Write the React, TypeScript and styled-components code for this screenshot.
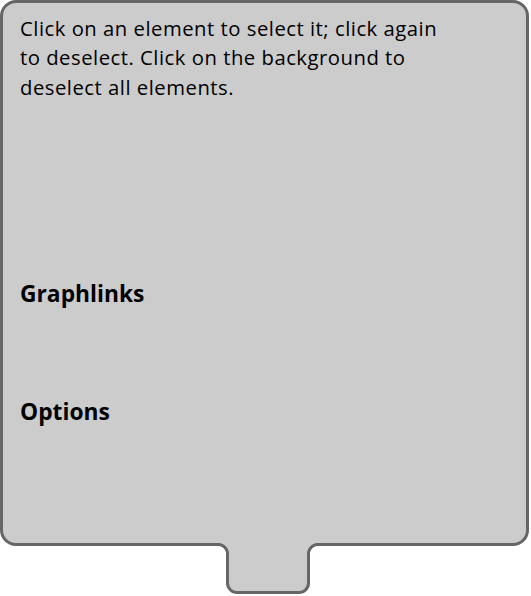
import React from "react";
import styled, { createGlobalStyle } from "styled-components";

const Global = createGlobalStyle`
  html, body { margin: 0; padding: 0; background: #ffffff; }
  body { font-family: "Open Sans", "Liberation Sans", sans-serif; }
`;

const Frame = styled.div`
  display: flex;
  flex-direction: column;
  width: 529px;
`;

const Panel = styled.div`
  box-sizing: border-box;
  width: 529px;
  height: 546px;
  background: #cccccc;
  border: 3px solid #666666;
  border-radius: 16px;
  padding: 10.5px 17px 0 17px;
  color: #000;
  position: relative;
  z-index: 1;
`;

const Intro = styled.p`
  margin: 0;
  font-size: 20.3px;
  line-height: 29.5px;
  letter-spacing: 0.5px;
  width: 432px;
`;

const Heading = styled.h2<{ $gap: number }>`
  margin: ${(p) => p.$gap}px 0 0 0;
  font-size: 22.8px;
  font-weight: 700;
  line-height: 28px;
  letter-spacing: 0;
`;

const Tab = styled.div`
  box-sizing: border-box;
  position: relative;
  z-index: 2;
  margin: -3px 0 0 226px;
  width: 84px;
  height: 51px;
  background: #cccccc;
  border: 3px solid #666666;
  border-top: none;
  border-radius: 0 0 11px 11px;

  &::before,
  &::after {
    content: "";
    position: absolute;
    top: 0;
    width: 11px;
    height: 11px;
  }
  &::before {
    left: -11px;
    background: radial-gradient(circle at 0 100%, rgba(255,255,255,0) 7.6px, #666666 8.4px, #666666 10.6px, #cccccc 11.4px);
  }
  &::after {
    right: -11px;
    background: radial-gradient(circle at 100% 100%, rgba(255,255,255,0) 7.6px, #666666 8.4px, #666666 10.6px, #cccccc 11.4px);
  }
`;

export default function App() {
  return (
    <>
      <Global />
      <Frame>
        <Panel>
          <Intro>
            Click on an element to select it; click again to deselect. Click on the background to deselect all elements.
          </Intro>
          <Heading $gap={178}>Graphlinks</Heading>
          <Heading $gap={90}>Options</Heading>
        </Panel>
        <Tab />
      </Frame>
    </>
  );
}
